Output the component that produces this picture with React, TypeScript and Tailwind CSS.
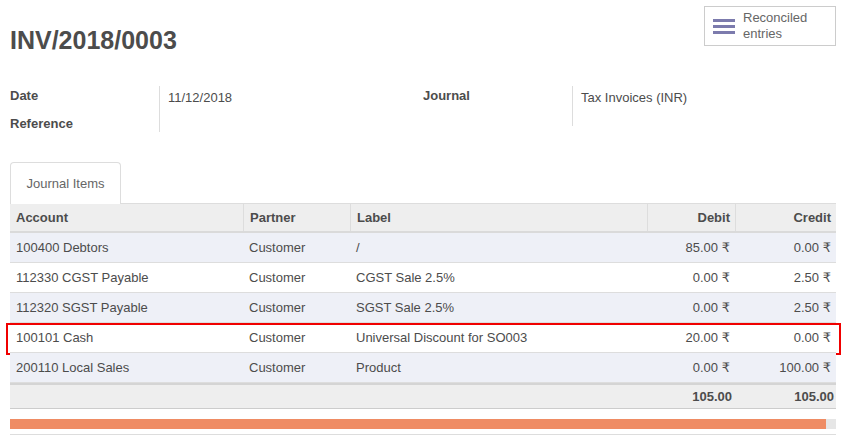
import React from 'react';

interface Line {
  account: string;
  partner: string;
  label: string;
  debit: string;
  credit: string;
  highlight?: boolean;
}

const LINES: Line[] = [
  { account: '100400 Debtors', partner: 'Customer', label: '/', debit: '85.00', credit: '0.00' },
  { account: '112330 CGST Payable', partner: 'Customer', label: 'CGST Sale 2.5%', debit: '0.00', credit: '2.50' },
  { account: '112320 SGST Payable', partner: 'Customer', label: 'SGST Sale 2.5%', debit: '0.00', credit: '2.50' },
  { account: '100101 Cash', partner: 'Customer', label: 'Universal Discount for SO003', debit: '20.00', credit: '0.00', highlight: true },
  { account: '200110 Local Sales', partner: 'Customer', label: 'Product', debit: '0.00', credit: '100.00' },
];

const cols = 'grid grid-cols-[233px_107px_297px_88px_101px]';

const Amount = ({ value }: { value: string }) => (
  <span>
    {value} <span className="font-['DejaVu_Sans',sans-serif] text-[13px]">₹</span>
  </span>
);

export default function App() {
  return (
    <div className="w-[846px] h-[437px] bg-white overflow-hidden text-[13px] text-[#4c4c4c] font-['Liberation_Sans',Arial,sans-serif] relative">
      <div className="flex justify-between items-start pl-[10px] pr-[10px] pt-[6px]">
        <h1 className="mt-[19px] text-[25px] font-bold leading-[30px] text-[#4c4c4c]">INV/2018/0003</h1>
        <button className="w-[132px] h-[40px] border border-[#cccccc] flex items-center pl-[8px] text-left text-[#666666] leading-[16px]">
          <svg width="22" height="18" viewBox="0 0 22 18" className="mr-[8px] shrink-0">
            <rect x="0" y="2" width="22" height="3" fill="#7c7bad" />
            <rect x="0" y="8" width="22" height="3" fill="#7c7bad" />
            <rect x="0" y="14" width="22" height="3" fill="#7c7bad" />
          </svg>
          <span>Reconciled<br />entries</span>
        </button>
      </div>

      <div className="flex px-[10px] mt-[31px]">
        <div className="flex w-[413px]">
          <div className="w-[149px] flex flex-col gap-[12px] pt-[2px] font-bold">
            <div className="leading-[16px]">Date</div>
            <div className="leading-[16px]">Reference</div>
          </div>
          <div className="border-l border-[#dddddd] h-[46px] pl-[8px] pt-[4px] leading-[16px]">11/12/2018</div>
        </div>
        <div className="flex">
          <div className="w-[149px] pt-[2px] font-bold leading-[16px]">Journal</div>
          <div className="border-l border-[#dddddd] h-[40px] pl-[8px] pt-[4px] leading-[16px]">Tax Invoices (INR)</div>
        </div>
      </div>

      <div className="px-[10px] mt-[30px]">
        <div className="flex">
          <div className="w-[111px] h-[42px] border border-b-0 border-[#dddddd] rounded-t-[4px] flex items-center justify-center text-[#666666] -mb-px bg-white relative z-10">
            Journal Items
          </div>
        </div>

        <div className="w-[826px]">
          <div className={`${cols} h-[30px] bg-[#eeeeee] border-t border-[#dddddd] border-b-2 border-b-[#dadada] font-bold`}>
            <div className="px-[6px] flex items-center">Account</div>
            <div className="px-[6px] flex items-center border-l border-[#dddddd]">Partner</div>
            <div className="px-[6px] flex items-center border-l border-[#dddddd]">Label</div>
            <div className="px-[5px] flex items-center justify-end border-l border-[#dddddd]">Debit</div>
            <div className="px-[5px] flex items-center justify-end border-l border-[#dddddd]">Credit</div>
          </div>

          {LINES.map((l, i) => (
            <div
              key={l.account}
              className={`${cols} h-[30px] border-b border-[#dddddd] relative ${i % 2 === 0 ? 'bg-[#eef0f7]' : 'bg-white'}`}
            >
              <div className="px-[6px] flex items-center">{l.account}</div>
              <div className="px-[6px] flex items-center">{l.partner}</div>
              <div className="px-[6px] flex items-center">{l.label}</div>
              <div className="px-[5px] flex items-center justify-end"><Amount value={l.debit} /></div>
              <div className="px-[5px] flex items-center justify-end"><Amount value={l.credit} /></div>
              {l.highlight && (
                <div className="absolute -left-[4px] -right-[5px] top-0 -bottom-[3px] border-2 border-[#f00000] pointer-events-none" />
              )}
            </div>
          ))}

          <div className={`${cols} h-[26px] bg-[#eeeeee] border-t-2 border-[#d4d4d4] border-b border-b-[#cccccc] font-bold`}>
            <div />
            <div />
            <div />
            <div className="px-[3px] flex items-center justify-end">105.00</div>
            <div className="px-[2px] flex items-center justify-end">105.00</div>
          </div>

          <div className="mt-[10px] h-[10px] bg-[#e6e6e6]">
            <div className="h-full w-[816px] bg-[#ef8c64]" />
          </div>
          <div className="mt-[5px] border-t border-[#dddddd]" />
        </div>
      </div>
    </div>
  );
}
